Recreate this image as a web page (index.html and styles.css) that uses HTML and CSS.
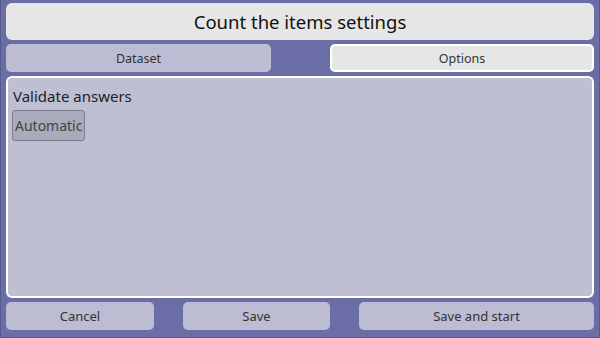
FILE: index.html
```html
<!DOCTYPE html>
<html lang="en">
<head>
    <meta charset="UTF-8">
    <title>Count the items settings</title>
    <link rel="stylesheet" href="styles.css">
</head>
<body>
    <div class="window">
        <div class="title">Count the items settings</div>
        <div class="tabs">
            <div class="tab">Dataset</div>
            <div class="tab active">Options</div>
        </div>
        <div class="panel">
            <div class="label">Validate answers</div>
            <button class="choice">Automatic</button>
        </div>
        <div class="actions">
            <div class="action">Cancel</div>
            <div class="action">Save</div>
            <div class="action wide">Save and start</div>
        </div>
    </div>
</body>
</html>
```

FILE: styles.css
```css
body {
    margin: 0;
    background: #6b6ea6;
    font-family: "Noto Sans", sans-serif;
    color: #222;
}
.window {
    width: 600px;
    height: 338px;
    box-sizing: border-box;
    padding: 3px 5px 7px 5px;
    border: 1px solid #575a8e;
    border-top: none;
    display: flex;
    flex-direction: column;
    gap: 4px;
}
.title {
    height: 37px;
    background: #e6e6e6;
    border-radius: 6px;
    display: flex;
    justify-content: center;
    align-items: center;
    font-size: 18.5px;
    color: #111;
}
.tabs {
    display: grid;
    grid-template-columns: 265px 264px;
    justify-content: space-between;
    height: 28px;
}
.tab {
    background: #bcbdd2;
    border-radius: 5px;
    display: flex;
    justify-content: center;
    align-items: center;
    font-size: 12.5px;
    color: #333;
}
.tab.active {
    background: #e6e6e6;
    border: 2px solid #fff;
}
.panel {
    flex: 1;
    background: #bebfd3;
    border: 2px solid #fff;
    border-radius: 6px;
    padding: 8px 4px;
}
.label {
    font-size: 15px;
    line-height: 20px;
    padding-left: 1px;
}
.choice {
    display: block;
    margin-top: 4px;
    height: 31px;
    padding: 0 2px;
    background: #a9aabb;
    border: 1px solid #7a7c8c;
    border-radius: 3px;
    font-family: inherit;
    font-size: 14px;
    color: #444;
}
.actions {
    display: grid;
    grid-template-columns: 148px 147px 235px;
    justify-content: space-between;
    height: 28px;
}
.action {
    background: #bcbdd2;
    border-radius: 5px;
    display: flex;
    justify-content: center;
    align-items: center;
    font-size: 13px;
    color: #333;
}
```
